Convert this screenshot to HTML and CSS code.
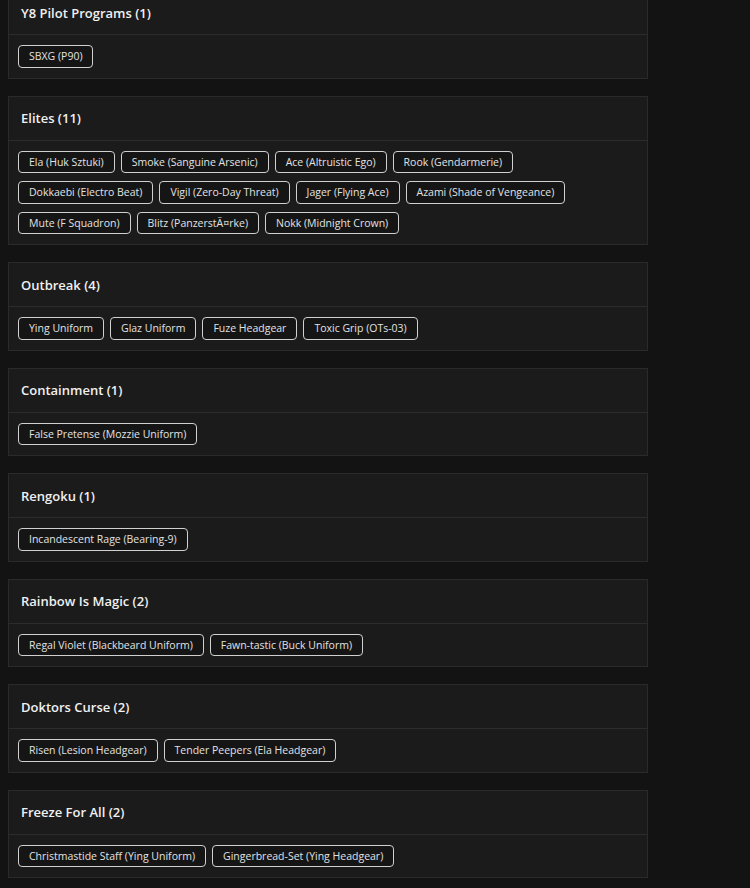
FILE: index.html
```html
<!DOCTYPE html>
<html lang="en">

<head>
    <meta charset="UTF-8">
    <meta name="viewport" content="width=device-width, initial-scale=1.0">
    <title>Bundles</title>
    <link rel="stylesheet" href="styles.css">
</head>

<body>
    <div class="collections">
        <div class="collection">
            <div class="collection-head">
                <h3>Y8 Pilot Programs (1)</h3>
            </div>
            <div class="items">
                <span class="item">SBXG (P90)</span>
            </div>
        </div>

        <div class="collection">
            <div class="collection-head">
                <h3>Elites (11)</h3>
            </div>
            <div class="items">
                <span class="item">Ela (Huk Sztuki)</span>
                <span class="item">Smoke (Sanguine Arsenic)</span>
                <span class="item">Ace (Altruistic Ego)</span>
                <span class="item">Rook (Gendarmerie)</span>
                <span class="item">Dokkaebi (Electro Beat)</span>
                <span class="item">Vigil (Zero-Day Threat)</span>
                <span class="item">Jager (Flying Ace)</span>
                <span class="item">Azami (Shade of Vengeance)</span>
                <span class="item">Mute (F Squadron)</span>
                <span class="item">Blitz (PanzerstÃ¤rke)</span>
                <span class="item">Nokk (Midnight Crown)</span>
            </div>
        </div>

        <div class="collection">
            <div class="collection-head">
                <h3>Outbreak (4)</h3>
            </div>
            <div class="items">
                <span class="item">Ying Uniform</span>
                <span class="item">Glaz Uniform</span>
                <span class="item">Fuze Headgear</span>
                <span class="item">Toxic Grip (OTs-03)</span>
            </div>
        </div>

        <div class="collection">
            <div class="collection-head">
                <h3>Containment (1)</h3>
            </div>
            <div class="items">
                <span class="item">False Pretense (Mozzie Uniform)</span>
            </div>
        </div>

        <div class="collection">
            <div class="collection-head">
                <h3>Rengoku (1)</h3>
            </div>
            <div class="items">
                <span class="item">Incandescent Rage (Bearing-9)</span>
            </div>
        </div>

        <div class="collection">
            <div class="collection-head">
                <h3>Rainbow Is Magic (2)</h3>
            </div>
            <div class="items">
                <span class="item">Regal Violet (Blackbeard Uniform)</span>
                <span class="item">Fawn-tastic (Buck Uniform)</span>
            </div>
        </div>

        <div class="collection">
            <div class="collection-head">
                <h3>Doktors Curse (2)</h3>
            </div>
            <div class="items">
                <span class="item">Risen (Lesion Headgear)</span>
                <span class="item">Tender Peepers (Ela Headgear)</span>
            </div>
        </div>

        <div class="collection">
            <div class="collection-head">
                <h3>Freeze For All (2)</h3>
            </div>
            <div class="items">
                <span class="item">Christmastide Staff (Ying Uniform)</span>
                <span class="item">Gingerbread-Set (Ying Headgear)</span>
            </div>
        </div>
    </div>
</body>

</html>
```

FILE: styles.css
```css
* {
    box-sizing: border-box;
}

body {
    margin: 0;
    background-color: #131313;
    color: #e8e8e8;
    font-family: "Open Sans", sans-serif;
}

/* list is scrolled a little, so the first card starts above the top edge */
.collections {
    display: flex;
    flex-direction: column;
    gap: 17px;
    width: 640px;
    margin-left: 8px;
    margin-top: -10px;
}

.collection {
    background-color: #1b1b1b;
    border: 1px solid #2a2a2a;
}

.collection-head {
    height: 44px;
    padding: 0 12px;
    display: flex;
    align-items: center;
    border-bottom: 1px solid #2c2c2c;
}

.collection-head h3 {
    margin: 0;
    font-size: 13px;
    font-weight: 600;
    color: #f0f0f0;
}

.items {
    display: flex;
    flex-wrap: wrap;
    gap: 8px 6px;
    padding: 10px 9px;
}

.item {
    display: inline-block;
    height: 22.5px;
    line-height: 20.5px;
    padding: 0 10px;
    font-size: 10.5px;
    color: #e2e2e2;
    background-color: #151515;
    border: 1px solid #d0d0d0;
    border-radius: 4px;
    white-space: nowrap;
}
```
